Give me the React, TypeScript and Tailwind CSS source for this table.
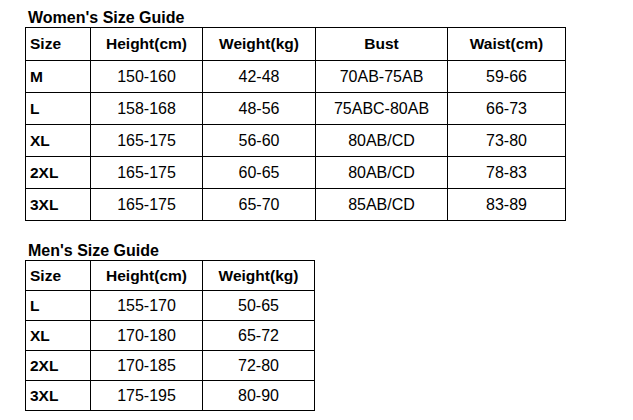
const women = {
  cols: "grid-cols-[65px_112px_113px_132px_118px]",
  head: ["Size", "Height(cm)", "Weight(kg)", "Bust", "Waist(cm)"],
  rows: [
    ["M", "150-160", "42-48", "70AB-75AB", "59-66"],
    ["L", "158-168", "48-56", "75ABC-80AB", "66-73"],
    ["XL", "165-175", "56-60", "80AB/CD", "73-80"],
    ["2XL", "165-175", "60-65", "80AB/CD", "78-83"],
    ["3XL", "165-175", "65-70", "85AB/CD", "83-89"],
  ],
};

const men = {
  cols: "grid-cols-[65px_112px_112px]",
  head: ["Size", "Height(cm)", "Weight(kg)"],
  rows: [
    ["L", "155-170", "50-65"],
    ["XL", "170-180", "65-72"],
    ["2XL", "170-185", "72-80"],
    ["3XL", "175-195", "80-90"],
  ],
};

function SizeTable({
  title,
  data,
  headH,
  rowH,
}: {
  title: string;
  data: { cols: string; head: string[]; rows: string[][] };
  headH: string;
  rowH: string;
}) {
  return (
    <div>
      <div className="ml-[28px] text-[16px] leading-[18px] font-bold text-black">{title}</div>
      <div className={`ml-[25px] grid w-fit border-l border-t border-black ${data.cols}`}>
        {data.head.map((h, i) => (
          <div
            key={h}
            className={`flex items-center border-b border-r border-black text-[15.5px] font-bold text-black ${headH} ${
              i === 0 ? "pl-[4px]" : "justify-center"
            }`}
          >
            {h}
          </div>
        ))}
        {data.rows.map((row) =>
          row.map((cell, i) => (
            <div
              key={row[0] + i}
              className={`flex items-center border-b border-r border-black text-black ${rowH} ${
                i === 0 ? "pl-[4px] text-[15.5px] font-bold" : "justify-center text-[16px]"
              }`}
            >
              {cell}
            </div>
          ))
        )}
      </div>
    </div>
  );
}

export default function App() {
  return (
    <div className="h-[420px] w-[633px] bg-white pt-[9px] font-['Liberation_Sans',Arial,sans-serif]">
      <SizeTable title="Women's Size Guide" data={women} headH="h-[33px]" rowH="h-[32px]" />
      <div className="mt-[21px]">
        <SizeTable title="Men's Size Guide" data={men} headH="h-[30px]" rowH="h-[30px]" />
      </div>
    </div>
  );
}
